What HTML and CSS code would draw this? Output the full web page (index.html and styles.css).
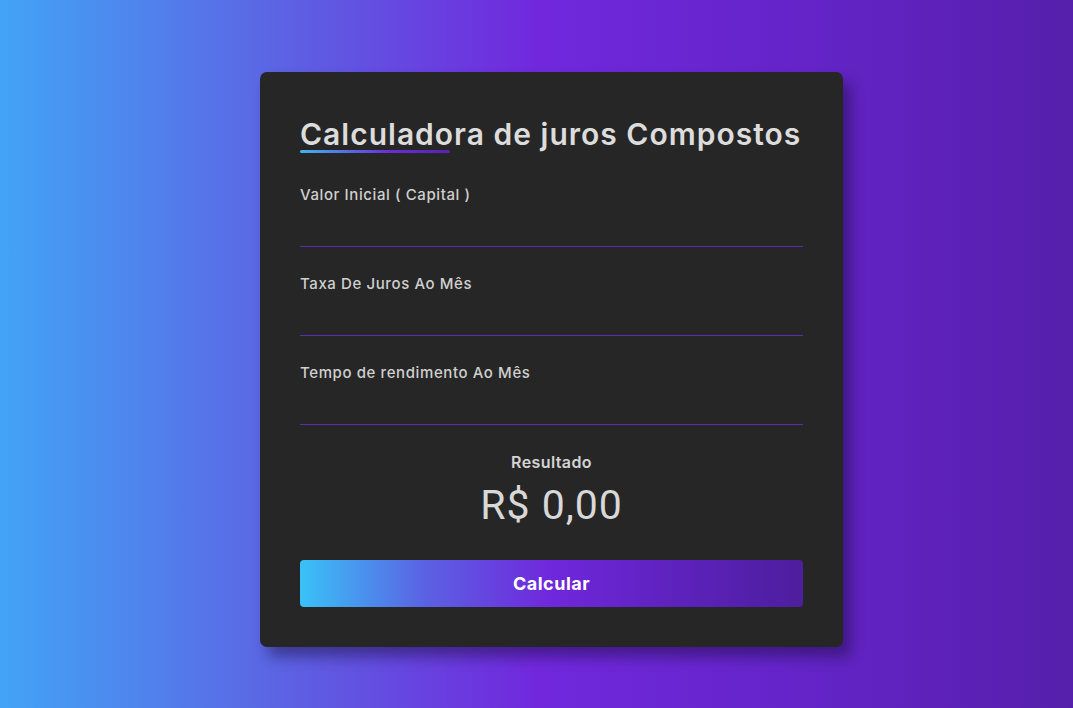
FILE: index.html
```html
<!DOCTYPE html>
<html lang="pt-BR">
<head>
<meta charset="utf-8">
<title>Calculadora de juros Compostos</title>
<link rel="stylesheet" href="styles.css">
</head>
<body>
<main class="page">
  <section class="card">
    <h1 class="title">Calculadora de juros Compostos</h1>
    <div class="field">
      <label class="label" for="capital">Valor Inicial ( Capital )</label>
      <input class="input" id="capital" type="text">
    </div>
    <div class="field">
      <label class="label" for="taxa">Taxa De Juros Ao Mês</label>
      <input class="input" id="taxa" type="text">
    </div>
    <div class="field">
      <label class="label" for="tempo">Tempo de rendimento Ao Mês</label>
      <input class="input" id="tempo" type="text">
    </div>
    <div class="result">
      <div class="result-label">Resultado</div>
      <div class="result-value">R$ 0,00</div>
    </div>
    <button class="btn" type="button">Calcular</button>
  </section>
</main>
</body>
</html>
```
FILE: styles.css
```css
* { box-sizing: border-box; }
html, body { margin: 0; padding: 0; }
body {
  font-family: Inter, "Open Sans", sans-serif;
  background: linear-gradient(to right, #42a4f6 0%, #5b66e4 25%, #7128dd 50%, #6424c8 75%, #561fab 100%);
  min-height: 708px;
}
.page {
  height: 708px;
  display: flex;
  align-items: flex-start;
  justify-content: center;
  padding-top: 72px;
  padding-left: 30px;
}
.card {
  width: 583px;
  background: #262626;
  border-radius: 7px;
  padding: 40px;
  box-shadow: 8px 10px 14px rgba(20, 10, 50, 0.45);
  display: flex;
  flex-direction: column;
}
.title {
  margin: 0 0 27px;
  font-size: 30px;
  font-weight: 600;
  line-height: 45px;
  color: #dcdcdc;
  letter-spacing: 1px;
  position: relative;
}
.title::after {
  content: "";
  position: absolute;
  left: 0;
  bottom: 4px;
  width: 150px;
  height: 3px;
  border-radius: 2px;
  background: linear-gradient(to right, #3fb4f0, #6c2cd6 60%, #5a22b0);
}
.field {
  display: flex;
  flex-direction: column;
  margin-bottom: 26px;
}
.label {
  font-size: 15px;
  font-weight: 500;
  line-height: 22px;
  color: #d0d0d0;
  letter-spacing: 0.6px;
}
.input {
  display: block;
  height: 41px;
  padding: 0;
  background-color: transparent;
  border-width: 0 0 1px 0;
  border-style: solid;
  border-color: #5430aa;
  color: #ddd;
  font: inherit;
  outline: none;
  -webkit-appearance: none;
  appearance: none;
}
.result {
  display: flex;
  flex-direction: column;
  align-items: center;
  margin-top: -1px;
  margin-bottom: 30px;
}
.result-label {
  font-size: 16px;
  font-weight: 600;
  line-height: 24px;
  color: #d4d4d4;
  letter-spacing: 0.4px;
}
.result-value {
  font-family: Roboto, sans-serif;
  font-size: 41px;
  font-weight: 400;
  line-height: 50px;
  color: #d8d8d8;
  margin-top: 6px;
  letter-spacing: 1px;
}
.btn {
  height: 47px;
  border: none;
  border-radius: 4px;
  background: linear-gradient(to right, #39c2f7 0%, #5b61e3 25%, #7027dc 50%, #5d22bd 75%, #4d1e9d 100%);
  color: #ffffff;
  font-family: inherit;
  font-size: 18px;
  font-weight: 700;
  letter-spacing: 0.5px;
  cursor: pointer;
}
```
